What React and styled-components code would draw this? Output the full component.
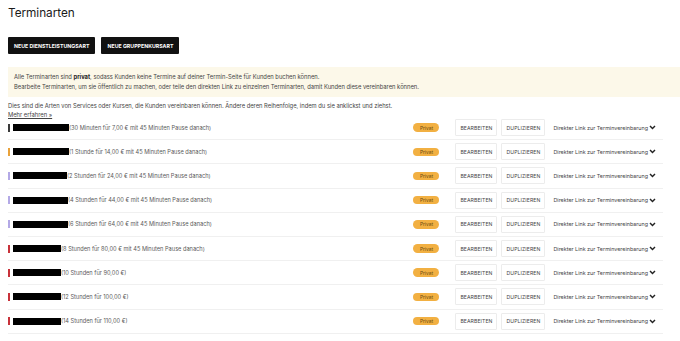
import React from 'react'
import styled, { createGlobalStyle } from 'styled-components'

const Global = createGlobalStyle`
  body {
    margin: 0;
    background: #fff;
    font-family: Inter, "Noto Sans", sans-serif;
    color: #1a1a1a;
  }
`;

const Page = styled.div`
  padding: 5px 0 0 8px;
`;

const Title = styled.h1`
  margin: 0;
  font-size: 11.8px;
  font-weight: 400;
  line-height: 16px;
  letter-spacing: -0.05px;
`;

const Actions = styled.div`
  display: flex;
  gap: 6px;
  margin-top: 16px;
`;

const DarkButton = styled.button`
  background: #111;
  color: #fff;
  border: none;
  border-radius: 1px;
  height: 17px;
  padding: 0 6px;
  font-family: inherit;
  font-size: 5.25px;
  font-weight: 700;
  text-transform: uppercase;
`;

const Notice = styled.div`
  margin-top: 13px;
  background: #fcf8e9;
  padding: 5px 6px;
  font-size: 5.8px;
  line-height: 10px;
  color: #444;

  b { color: #222; font-weight: 700; }
`;

const Intro = styled.div`
  margin-top: 4px;
  font-size: 5.8px;
  line-height: 9px;
  color: #444;
`;

const More = styled.a`
  color: #444;
  text-decoration: underline;
`;

const List = styled.div`
  width: 655px;
  margin-top: -3px;
`;

const Row = styled.div`
  display: flex;
  align-items: center;
  height: 24.2px;
  border-bottom: 1px solid #f0f0f0;
  box-sizing: border-box;
  padding-right: 7px;
`;

const Bar = styled.span`
  width: 2px;
  height: 8px;
  background: ${p => p.$color};
  flex-shrink: 0;
`;

const Redacted = styled.span`
  display: inline-block;
  width: ${p => p.$w}px;
  height: 7px;
  background: #000;
  margin-left: 3px;
  flex-shrink: 0;
`;

const Details = styled.span`
  flex: 1;
  font-size: 5.65px;
  color: #5a5a5a;
  white-space: nowrap;
`;

const Badge = styled.span`
  width: 26px;
  height: 8.5px;
  border-radius: 5px;
  background: #f2b042;
  color: #6a4a10;
  font-size: 4.8px;
  display: flex;
  align-items: center;
  justify-content: center;
  margin-right: 16px;
`;

const OutlineButton = styled.button`
  height: 17px;
  width: ${p => p.$w}px;
  border: 1px solid #ececec;
  background: #fff;
  border-radius: 1px;
  font-family: inherit;
  font-size: 5.1px;
  color: #444;
  letter-spacing: 0.1px;
  padding: 0;
  margin-right: 4px;
`;

const LinkToggle = styled.span`
  display: flex;
  align-items: center;
  gap: 1px;
  margin-left: 4px;
  font-size: 5.4px;
  color: #444;
  white-space: nowrap;
`;

const Chevron = () => (
  <svg width="7" height="5" viewBox="0 0 7 5">
    <path d="M1 1 L3.5 3.6 L6 1" fill="none" stroke="#222" strokeWidth="1.4" />
  </svg>
);

const types = [
  { color: '#3a3a3a', w: 56, text: '(30 Minuten für 7,00 € mit 45 Minuten Pause danach)' },
  { color: '#e9a23b', w: 56, text: '(1 Stunde für 14,00 € mit 45 Minuten Pause danach)' },
  { color: '#b3a9e6', w: 54, text: '(2 Stunden für 24,00 € mit 45 Minuten Pause danach)' },
  { color: '#b3a9e6', w: 55, text: '(4 Stunden für 44,00 € mit 45 Minuten Pause danach)' },
  { color: '#b3a9e6', w: 55, text: '(6 Stunden für 64,00 € mit 45 Minuten Pause danach)' },
  { color: '#c8323a', w: 48, text: '(8 Stunden für 80,00 € mit 45 Minuten Pause danach)' },
  { color: '#c8323a', w: 48, text: '(10 Stunden für 90,00 €)' },
  { color: '#c8323a', w: 48, text: '(12 Stunden für 100,00 €)' },
  { color: '#c8323a', w: 48, text: '(14 Stunden für 110,00 €)' },
];

export default function App() {
  return (
    <Page>
      <Global />
      <Title>Terminarten</Title>
      <Actions>
        <DarkButton>Neue Dienstleistungsart</DarkButton>
        <DarkButton>Neue Gruppenkursart</DarkButton>
      </Actions>
      <Notice>
        Alle Terminarten sind <b>privat</b>, sodass Kunden keine Termine auf deiner Termin-Seite für Kunden buchen können.
        <br />
        Bearbeite Terminarten, um sie öffentlich zu machen, oder teile den direkten Link zu einzelnen Terminarten, damit Kunden diese vereinbaren können.
      </Notice>
      <Intro>
        Dies sind die Arten von Services oder Kursen, die Kunden vereinbaren können. Ändere deren Reihenfolge, indem du sie anklickst und ziehst.
        <br />
        <More href="#">Mehr erfahren »</More>
      </Intro>
      <List>
        {types.map((t, i) => (
          <Row key={i}>
            <Bar $color={t.color} />
            <Redacted $w={t.w} />
            <Details>{t.text}</Details>
            <Badge>Privat</Badge>
            <OutlineButton $w={42}>BEARBEITEN</OutlineButton>
            <OutlineButton $w={44}>DUPLIZIEREN</OutlineButton>
            <LinkToggle>Direkter Link zur Terminvereinbarung <Chevron /></LinkToggle>
          </Row>
        ))}
      </List>
    </Page>
  )
}
